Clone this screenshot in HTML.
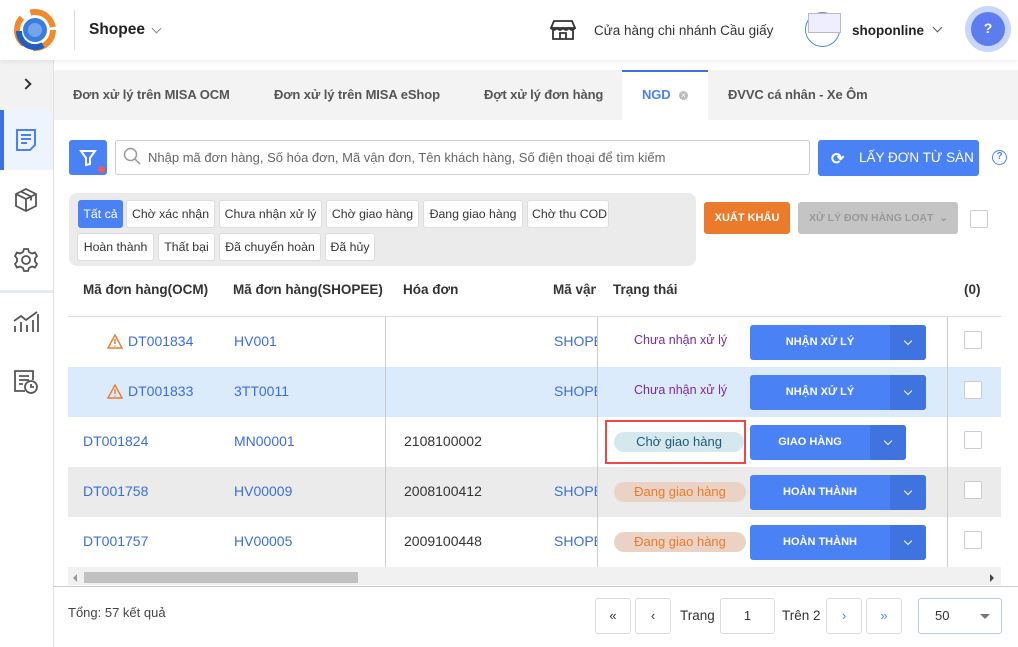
<!DOCTYPE html>
<html><head><meta charset="utf-8"><style>
*{box-sizing:border-box;margin:0;padding:0}
body{width:1018px;height:647px;overflow:hidden;font-family:"Liberation Sans",Arial,sans-serif;background:#fff;position:relative;color:#333;font-size:13px}
.a{position:absolute}
.hdr{left:0;top:0;width:1018px;height:60px;background:#fff;box-shadow:0 2px 4px rgba(0,0,0,.06);z-index:2}
.side{left:0;top:60px;width:54px;height:587px;background:#fff;border-right:1px solid #e2e2e2}
.tabs{left:54px;top:70px;width:964px;height:50px;background:#f3f3f3}
.tab{top:0;height:50px;line-height:50px;font-weight:bold;font-size:13px;color:#555;letter-spacing:-.1px}
.chip{position:absolute;height:28px;line-height:26px;border:1px solid #ddd;background:#fff;border-radius:3px;padding:0 4px;font-size:12.3px;color:#333;white-space:nowrap;overflow:hidden;text-align:center}
.row{left:68px;width:933px;height:50px}
.lnk{color:#3b6fd8}
.btn{height:35px;background:#4a82f5;border-radius:3px;color:#fff;font-weight:bold;font-size:11px;line-height:35px;text-align:center}
.btn .dd{position:absolute;right:0;top:0;width:36px;height:35px;background:#3f73e0;border-radius:0 3px 3px 0}
.btn .dd:after{content:"";position:absolute;left:15px;top:13px;width:5px;height:5px;border-right:1.5px solid #fff;border-bottom:1.5px solid #fff;transform:rotate(45deg)}
.cb{width:18px;height:18px;border:1px solid #ccc;border-radius:2px;background:#fff}
.pill{height:20px;line-height:20px;border-radius:10px;text-align:center;font-size:13px}
.pg{top:598px;height:36px;border:1px solid #ddd;border-radius:3px;background:#fff;text-align:center;line-height:34px}
.clip{overflow:hidden;white-space:nowrap;width:43px}
</style></head><body>
<div class="a hdr">
 <svg class="a" style="left:14px;top:9px" width="42" height="42" viewBox="0 0 42 42"><circle cx="21" cy="21" r="18" fill="none" stroke="#f08a2c" stroke-width="6" stroke-dasharray="30 10"/><circle cx="21" cy="21" r="12" fill="#3a7de0"/><path d="M5 22a16 16 0 0 0 24 14" stroke="#1f5fbf" stroke-width="6" fill="none"/><circle cx="21" cy="21" r="7" fill="#fff" opacity=".3"/></svg>
 <div class="a" style="left:74px;top:10px;width:1px;height:40px;background:#ddd"></div>
 <div class="a" style="left:89px;top:21px;font-weight:bold;font-size:15.5px;color:#222">Shopee</div>
 <div class="a" style="left:153px;top:25px;width:7px;height:7px;border-right:1px solid #888;border-bottom:1px solid #888;transform:rotate(45deg)"></div>
 <svg class="a" style="left:550px;top:19px" width="26" height="22" viewBox="0 0 26 22" fill="none" stroke="#333" stroke-width="1.8"><path d="M4 2h18l3 7H1z M1 9q3 4 6 0q3 4 6 0q3 4 6 0q3 4 6 0 M3 11v9h20v-9 M10 20v-6h6v6"/></svg>
 <div class="a" style="left:594px;top:23px;font-size:13.5px;color:#333">Cửa hàng chi nhánh Cầu giấy</div>
 <div class="a" style="left:805px;top:12px;width:35px;height:35px;border-radius:50%;border:1px solid #4a82f5"></div>
 <div class="a" style="left:808px;top:13px;width:33px;height:20px;border:1px solid #bbb;background:#eef"></div>
 <div class="a" style="left:852px;top:23px;font-weight:bold;font-size:13.5px;color:#222">shoponline</div>
 <div class="a" style="left:934px;top:24px;width:7px;height:7px;border-right:1.3px solid #555;border-bottom:1.3px solid #555;transform:rotate(45deg)"></div>
 <div class="a" style="left:965px;top:6px;width:46px;height:46px;border-radius:50%;background:#c9d6ff"></div>
 <div class="a" style="left:971px;top:12px;width:34px;height:34px;border-radius:50%;background:#5c7cf0;color:#fff;text-align:center;line-height:32px;font-weight:bold;font-size:14px">?</div>
</div>
<div class="a side">
 <div class="a" style="left:0;top:0;width:53px;height:50px;background:#f2f2f2"></div>
 <div class="a" style="left:22px;top:20px;width:8px;height:8px;border-right:2px solid #333;border-top:2px solid #333;transform:rotate(45deg)"></div>
 <div class="a" style="left:0;top:50px;width:53px;height:60px;background:#eef4fd"></div>
 <div class="a" style="left:0;top:50px;width:4px;height:60px;background:#3d72e0"></div>
 <svg class="a" style="left:14px;top:68px" width="24" height="24" viewBox="0 0 24 24" fill="none" stroke="#4a82f5" stroke-width="2"><path d="M3 2h18v15l-5 5H3z M7 7h10 M7 11h10 M7 15h6"/></svg>
 <svg class="a" style="left:13px;top:127px" width="26" height="26" viewBox="0 0 26 26" fill="none" stroke="#555" stroke-width="1.8"><path d="M13 2l10 5v12l-10 5-10-5V7z M3 7l10 5 10-5 M13 12v12 M8 4.5l10 5v4"/></svg>
 <svg class="a" style="left:13px;top:187px" width="26" height="26" viewBox="0 0 26 26" fill="none" stroke="#555" stroke-width="1.8"><circle cx="13" cy="13" r="4"/><path d="M11 2h4l1 3 3 1.5 3-1 2 3.5-2 2.5v3l2 2.5-2 3.5-3-1-3 1.5-1 3h-4l-1-3-3-1.5-3 1-2-3.5 2-2.5v-3l-2-2.5 2-3.5 3 1 3-1.5z"/></svg>
 <div class="a" style="left:0;top:230px;width:53px;height:3px;background:#e6ebf3"></div>
 <svg class="a" style="left:13px;top:250px" width="26" height="24" viewBox="0 0 26 24" fill="none" stroke="#555" stroke-width="1.8"><path d="M1 11l7-5 5 4 11-8 M2 16v6 M8 12v10 M14 15v7 M20 10v12 M25 4v18"/></svg>
 <svg class="a" style="left:13px;top:309px" width="26" height="26" viewBox="0 0 26 26" fill="none" stroke="#555" stroke-width="1.8"><path d="M12 22H2V2h18v9 M6 7h10 M6 11h10 M6 15h4"/><circle cx="18" cy="18" r="6"/><path d="M18 15v3h3"/></svg>
</div>
<div class="a tabs">
 <div class="a tab" style="left:19px">Đơn xử lý trên MISA OCM</div>
 <div class="a tab" style="left:220px">Đơn xử lý trên MISA eShop</div>
 <div class="a tab" style="left:430px">Đợt xử lý đơn hàng</div>
 <div class="a" style="left:568px;top:0;width:86px;height:50px;background:#fff;border-top:2px solid #3d72e0"></div>
 <div class="a tab" style="left:588px;color:#4a82f5">NGD</div>
 <div class="a" style="left:625px;top:21px;width:9px;height:9px;border-radius:50%;background:#bbb;color:#fff;font-size:8px;line-height:9px;text-align:center">×</div>
 <div class="a tab" style="left:674px">ĐVVC cá nhân - Xe Ôm</div>
</div>
<div class="a" style="left:69px;top:140px;width:38px;height:35px;background:#4a82f5;border-radius:3px"></div>
<svg class="a" style="left:79px;top:149px" width="18" height="18" viewBox="0 0 18 18" fill="none" stroke="#fff" stroke-width="2"><path d="M2 2h14l-5 7v6l-4 1V9z"/></svg>
<div class="a" style="left:98px;top:166px;width:7px;height:7px;border-radius:50%;background:#f05a5a"></div>
<div class="a" style="left:115px;top:140px;width:695px;height:35px;border:1px solid #ccc;border-radius:3px"></div>
<svg class="a" style="left:123px;top:147px" width="18" height="18" viewBox="0 0 18 18" fill="none" stroke="#999" stroke-width="1.5"><circle cx="7.5" cy="7.5" r="6"/><path d="M12 12l5 5"/></svg>
<div class="a" style="left:148px;top:150px;font-size:13px;color:#666">Nhập mã đơn hàng, Số hóa đơn, Mã vận đơn, Tên khách hàng, Số điện thoại để tìm kiếm</div>
<div class="a" style="left:818px;top:140px;width:161px;height:36px;background:#4a82f5;border-radius:3px;color:#fff;font-size:13.5px;line-height:36px;padding-left:41px;white-space:nowrap">LẤY ĐƠN TỪ SÀN</div>
<div class="a" style="left:831px;top:149px;color:#fff;font-size:16px;font-weight:bold">⟳</div>
<div class="a" style="left:992px;top:150px;width:15px;height:15px;border:1.5px solid #4a82f5;border-radius:50%;color:#4a82f5;font-size:10px;line-height:12px;text-align:center;font-weight:bold">?</div>
<div class="a" style="left:69px;top:193px;width:627px;height:73px;background:#ebebeb;border-radius:8px">
 <div class="chip" style="left:9px;top:7px;width:45px;background:#4a82f5;border-color:#4a82f5;color:#fff">Tất cả</div>
 <div class="chip" style="left:57px;top:7px;width:89px">Chờ xác nhận</div>
 <div class="chip" style="left:150px;top:7px;width:103px">Chưa nhận xử lý</div>
 <div class="chip" style="left:257px;top:7px;width:93px">Chờ giao hàng</div>
 <div class="chip" style="left:354px;top:7px;width:100px">Đang giao hàng</div>
 <div class="chip" style="left:458px;top:7px;width:82px">Chờ thu COD</div>
 <div class="chip" style="left:8px;top:40px;width:77px">Hoàn thành</div>
 <div class="chip" style="left:89px;top:40px;width:57px">Thất bại</div>
 <div class="chip" style="left:150px;top:40px;width:102px">Đã chuyển hoàn</div>
 <div class="chip" style="left:256px;top:40px;width:50px">Đã hủy</div>
</div>
<div class="a" style="left:704px;top:202px;width:86px;height:32px;background:#eb7a2a;border-radius:3px;color:#fff;font-weight:bold;font-size:11px;line-height:32px;text-align:center">XUẤT KHẨU</div>
<div class="a" style="left:798px;top:202px;width:160px;height:32px;background:#c4c4c4;border-radius:3px;color:#999;font-weight:bold;font-size:10.5px;line-height:32px;padding-left:11px;white-space:nowrap">XỬ LÝ ĐƠN HÀNG LOẠT &nbsp;⌄</div>
<div class="a cb" style="left:970px;top:210px"></div>
<div class="a" style="left:68px;top:270px;width:933px;height:47px;border-bottom:1px solid #ddd;font-weight:bold;font-size:13.5px;color:#333">
 <span class="a" style="left:15px;top:12px">Mã đơn hàng(OCM)</span>
 <span class="a" style="left:165px;top:12px">Mã đơn hàng(SHOPEE)</span>
 <span class="a" style="left:335px;top:12px">Hóa đơn</span>
 <span class="a clip" style="left:485px;top:12px">Mã vận đơn</span>
 <span class="a" style="left:545px;top:12px">Trạng thái</span>
 <span class="a" style="left:896px;top:12px">(0)</span>
</div>
<div class="a row" style="top:317px"></div>
<div class="a row" style="top:367px;background:#dcebfc"></div>
<div class="a row" style="top:467px;background:#ebebeb"></div>
<div class="a" style="left:385px;top:317px;width:1px;height:250px;background:#ccc"></div>
<div class="a" style="left:597px;top:317px;width:1px;height:250px;background:#ccc"></div>
<div class="a" style="left:947px;top:317px;width:1px;height:250px;background:#ccc"></div>
<div class="a" style="top:333px;left:0;width:1018px;font-size:14px">
 <svg class="a" style="left:107px;top:1px" width="16" height="15" viewBox="0 0 16 15" fill="none" stroke="#eb7a2a" stroke-width="1.4"><path d="M8 1L15 14H1z M8 5v5 M8 11.5v1"/></svg>
 <span class="a lnk" style="left:128px">DT001834</span><span class="a lnk" style="left:234px">HV001</span><span class="a lnk clip" style="left:554px">SHOPEE</span>
 <span class="a" style="left:634px;color:#7a2a9a;font-size:12.5px">Chưa nhận xử lý</span>
</div>
<div class="a" style="top:383px;left:0;width:1018px;font-size:14px">
 <svg class="a" style="left:107px;top:1px" width="16" height="15" viewBox="0 0 16 15" fill="none" stroke="#eb7a2a" stroke-width="1.4"><path d="M8 1L15 14H1z M8 5v5 M8 11.5v1"/></svg>
 <span class="a lnk" style="left:128px">DT001833</span><span class="a lnk" style="left:234px">3TT0011</span><span class="a lnk clip" style="left:554px">SHOPEE</span>
 <span class="a" style="left:634px;color:#7a2a9a;font-size:12.5px">Chưa nhận xử lý</span>
</div>
<div class="a" style="top:433px;left:0;width:1018px;font-size:14px">
 <span class="a lnk" style="left:83px">DT001824</span><span class="a lnk" style="left:234px">MN00001</span><span class="a" style="left:404px">2108100002</span>
</div>
<div class="a" style="top:483px;left:0;width:1018px;font-size:14px">
 <span class="a lnk" style="left:83px">DT001758</span><span class="a lnk" style="left:234px">HV00009</span><span class="a" style="left:404px">2008100412</span><span class="a lnk clip" style="left:554px">SHOPEE</span>
</div>
<div class="a" style="top:533px;left:0;width:1018px;font-size:14px">
 <span class="a lnk" style="left:83px">DT001757</span><span class="a lnk" style="left:234px">HV00005</span><span class="a" style="left:404px">2009100448</span><span class="a lnk clip" style="left:554px">SHOPEE</span>
</div>
<div class="a" style="left:605px;top:420px;width:141px;height:44px;border:2px solid #f04848"></div>
<div class="a pill" style="left:614px;top:432px;width:130px;background:#d5e8ee;color:#1e5a7a">Chờ giao hàng</div>
<div class="a pill" style="left:614px;top:482px;width:132px;background:#ead3c4;color:#eb7a2a">Đang giao hàng</div>
<div class="a pill" style="left:614px;top:532px;width:132px;background:#ead3c4;color:#eb7a2a">Đang giao hàng</div>
<div class="a btn" style="left:750px;top:325px;width:176px;padding-right:36px">NHẬN XỬ LÝ<div class="dd"></div></div>
<div class="a btn" style="left:750px;top:375px;width:176px;padding-right:36px">NHẬN XỬ LÝ<div class="dd"></div></div>
<div class="a btn" style="left:750px;top:425px;width:156px;padding-right:36px">GIAO HÀNG<div class="dd"></div></div>
<div class="a btn" style="left:750px;top:475px;width:176px;padding-right:36px">HOÀN THÀNH<div class="dd"></div></div>
<div class="a btn" style="left:750px;top:525px;width:176px;padding-right:36px">HOÀN THÀNH<div class="dd"></div></div>
<div class="a cb" style="left:964px;top:331px"></div>
<div class="a cb" style="left:964px;top:381px"></div>
<div class="a cb" style="left:964px;top:431px"></div>
<div class="a cb" style="left:964px;top:481px"></div>
<div class="a cb" style="left:964px;top:531px"></div>
<div class="a" style="left:68px;top:567px;width:933px;height:18px;background:#f1f1f1"></div>
<div class="a" style="left:84px;top:572px;width:274px;height:11px;background:#c1c1c1"></div>
<div class="a" style="left:73px;top:574px;width:0;height:0;border:4px solid transparent;border-right-color:#999;border-left:0"></div>
<div class="a" style="left:990px;top:574px;width:0;height:0;border:4px solid transparent;border-left-color:#444;border-right:0"></div>
<div class="a" style="left:53px;top:586px;width:965px;height:1px;background:#ccc"></div>
<div class="a" style="left:68px;top:605px;font-size:13px;color:#444">Tổng: 57 kết quả</div>
<div class="a pg" style="left:595px;width:36px">«</div>
<div class="a pg" style="left:635px;width:36px">‹</div>
<div class="a" style="left:680px;top:608px;font-size:13.5px">Trang</div>
<div class="a pg" style="left:720px;width:55px">1</div>
<div class="a" style="left:782px;top:608px;font-size:13.5px">Trên 2</div>
<div class="a pg" style="left:826px;width:36px;color:#4a82f5">›</div>
<div class="a pg" style="left:866px;width:36px;color:#4a82f5">»</div>
<div class="a pg" style="left:918px;width:84px;border-color:#bcc8dc;text-align:left;padding-left:16px">50</div>
<div class="a" style="left:980px;top:614px;border:5px solid transparent;border-top-color:#777;border-bottom:0"></div>
</body></html>
